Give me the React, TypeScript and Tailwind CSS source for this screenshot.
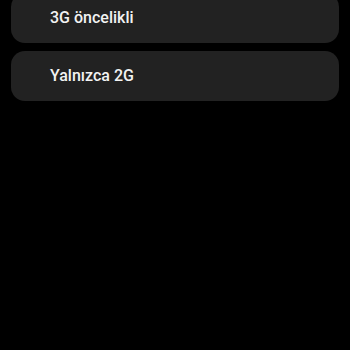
export default function App() {
  const options = ['3G öncelikli', 'Yalnızca 2G'];
  return (
    <div className="w-[350px] h-[350px] bg-black overflow-hidden font-['Roboto',sans-serif]">
      <div className="flex flex-col gap-2 px-[11px] mt-[-7px]">
        {options.map((label) => (
          <div
            key={label}
            className="h-[50px] rounded-[14px] bg-[#222222] flex items-center pl-[39px]"
          >
            <span className="text-[16px] font-medium text-[#f2f2f2]">{label}</span>
          </div>
        ))}
      </div>
    </div>
  );
}
